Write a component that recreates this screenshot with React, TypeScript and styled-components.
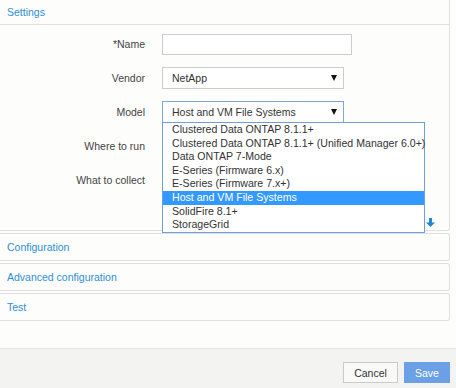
import React from "react";
import styled, { createGlobalStyle } from "styled-components";

const GlobalStyle = createGlobalStyle`
  html, body { margin: 0; padding: 0; background: #fdfdfb; }
  body { font-family: "Liberation Sans", Arial, sans-serif; }
  * { box-sizing: border-box; }
`;

const Page = styled.div`
  width: 456px;
  height: 388px;
  display: flex;
  flex-direction: column;
  overflow: hidden;
  background: #fdfdfb;
`;

const Main = styled.div`
  flex: 1;
  display: flex;
  flex-direction: column;
  gap: 2px;
  padding-right: 6px;
  border-bottom: 1px solid #e6e6e4;
`;

const Panel = styled.section<{ $open?: boolean }>`
  background: #fdfdfb;
  border: 1px solid #e0e0de;
  border-left: none;
  border-top: ${(p) => (p.$open ? "none" : "1px solid #e0e0de")};
  border-radius: ${(p) => (p.$open ? "0 0 3px 0" : "0 3px 3px 0")};
  position: relative;
`;

const PanelHeader = styled.div<{ $h: number; $line?: boolean }>`
  height: ${(p) => p.$h}px;
  display: flex;
  align-items: center;
  padding-left: 7px;
  color: #2d8fd6;
  font-size: 10.5px;
  border-bottom: ${(p) => (p.$line ? "1px solid #e0e0de" : "none")};
`;

const SettingsBody = styled.div`
  height: 205px;
  padding-top: 8px;
  display: flex;
  flex-direction: column;
  position: relative;
`;

const Form = styled.div`
  display: grid;
  grid-template-columns: 145px auto;
  grid-auto-rows: 22px;
  column-gap: 17px;
  row-gap: 12px;
  align-items: center;
`;

const Label = styled.label`
  text-align: right;
  font-size: 10.5px;
  color: #444;
`;

const Cell = styled.div`
  position: relative;
  display: flex;
  align-items: center;
  height: 22px;
`;

const TextInput = styled.div`
  width: 190px;
  height: 21px;
  background: #fff;
  border: 1px solid #cdcdcd;
`;

const Select = styled.div<{ $focus?: boolean }>`
  width: 182px;
  height: 22px;
  background: #fff;
  border: 1px solid ${(p) => (p.$focus ? "#7ea6de" : "#cdcdcd")};
  display: flex;
  align-items: center;
  justify-content: space-between;
  padding: 0 6px 0 9px;
  font-size: 10.5px;
  color: #333;
`;

const Caret = styled.span`
  width: 0;
  height: 0;
  border-left: 3px solid transparent;
  border-right: 3px solid transparent;
  border-top: 6px solid #111;
`;

const List = styled.ul`
  position: absolute;
  top: 21px;
  left: 0;
  width: 263px;
  margin: 0;
  padding: 0;
  list-style: none;
  background: #fff;
  border: 1px solid #6f9ee0;
  z-index: 5;
`;

const Item = styled.li<{ $active?: boolean }>`
  height: 13.6px;
  line-height: 13.6px;
  padding-left: 9px;
  font-size: 10.6px;
  white-space: nowrap;
  color: ${(p) => (p.$active ? "#fff" : "#333")};
  background: ${(p) => (p.$active ? "#3399ff" : "transparent")};
`;

const ArrowRow = styled.div`
  margin-top: auto;
  margin-bottom: 3px;
  display: flex;
  justify-content: flex-end;
  padding-right: 14px;
`;

const Footer = styled.div`
  height: 39px;
  background: #f3f4f2;
  display: flex;
  justify-content: flex-end;
  align-items: flex-start;
  gap: 6px;
  padding: 13px 6px 0 0;
`;

const Button = styled.button<{ $primary?: boolean }>`
  height: 21px;
  padding: 0;
  width: ${(p) => (p.$primary ? 46 : 55)}px;
  font-family: "Liberation Sans", Arial, sans-serif;
  font-size: 10.5px;
  border: 1px solid ${(p) => (p.$primary ? "#6ca0e6" : "#cacaca")};
  background: ${(p) => (p.$primary ? "#6ca0e6" : "#f9f9f8")};
  color: ${(p) => (p.$primary ? "#fff" : "#333")};
`;

const models = [
  "Clustered Data ONTAP 8.1.1+",
  "Clustered Data ONTAP 8.1.1+ (Unified Manager 6.0+)",
  "Data ONTAP 7-Mode",
  "E-Series (Firmware 6.x)",
  "E-Series (Firmware 7.x+)",
  "Host and VM File Systems",
  "SolidFire 8.1+",
  "StorageGrid",
];

export default function App() {
  return (
    <Page>
      <GlobalStyle />
      <Main>
        <Panel $open>
          <PanelHeader $h={25} $line>Settings</PanelHeader>
          <SettingsBody>
            <Form>
              <Label>*Name</Label>
              <Cell>
                <TextInput />
              </Cell>
              <Label>Vendor</Label>
              <Cell>
                <Select>
                  NetApp
                  <Caret />
                </Select>
              </Cell>
              <Label>Model</Label>
              <Cell>
                <Select $focus>
                  Host and VM File Systems
                  <Caret />
                </Select>
                <List>
                  {models.map((m) => (
                    <Item key={m} $active={m === "Host and VM File Systems"}>
                      {m}
                    </Item>
                  ))}
                </List>
              </Cell>
              <Label>Where to run</Label>
              <Cell>
                <Select />
              </Cell>
              <Label>What to collect</Label>
              <Cell>
                <Select />
              </Cell>
            </Form>
            <ArrowRow>
              <svg width="9" height="9" viewBox="0 0 9 9">
                <path d="M3 0h3v4.5h3L4.5 9 0 4.5h3z" fill="#1e88d0" />
              </svg>
            </ArrowRow>
          </SettingsBody>
        </Panel>
        <Panel>
          <PanelHeader $h={26}>Configuration</PanelHeader>
        </Panel>
        <Panel>
          <PanelHeader $h={26}>Advanced configuration</PanelHeader>
        </Panel>
        <Panel>
          <PanelHeader $h={26}>Test</PanelHeader>
        </Panel>
      </Main>
      <Footer>
        <Button>Cancel</Button>
        <Button $primary>Save</Button>
      </Footer>
    </Page>
  );
}
